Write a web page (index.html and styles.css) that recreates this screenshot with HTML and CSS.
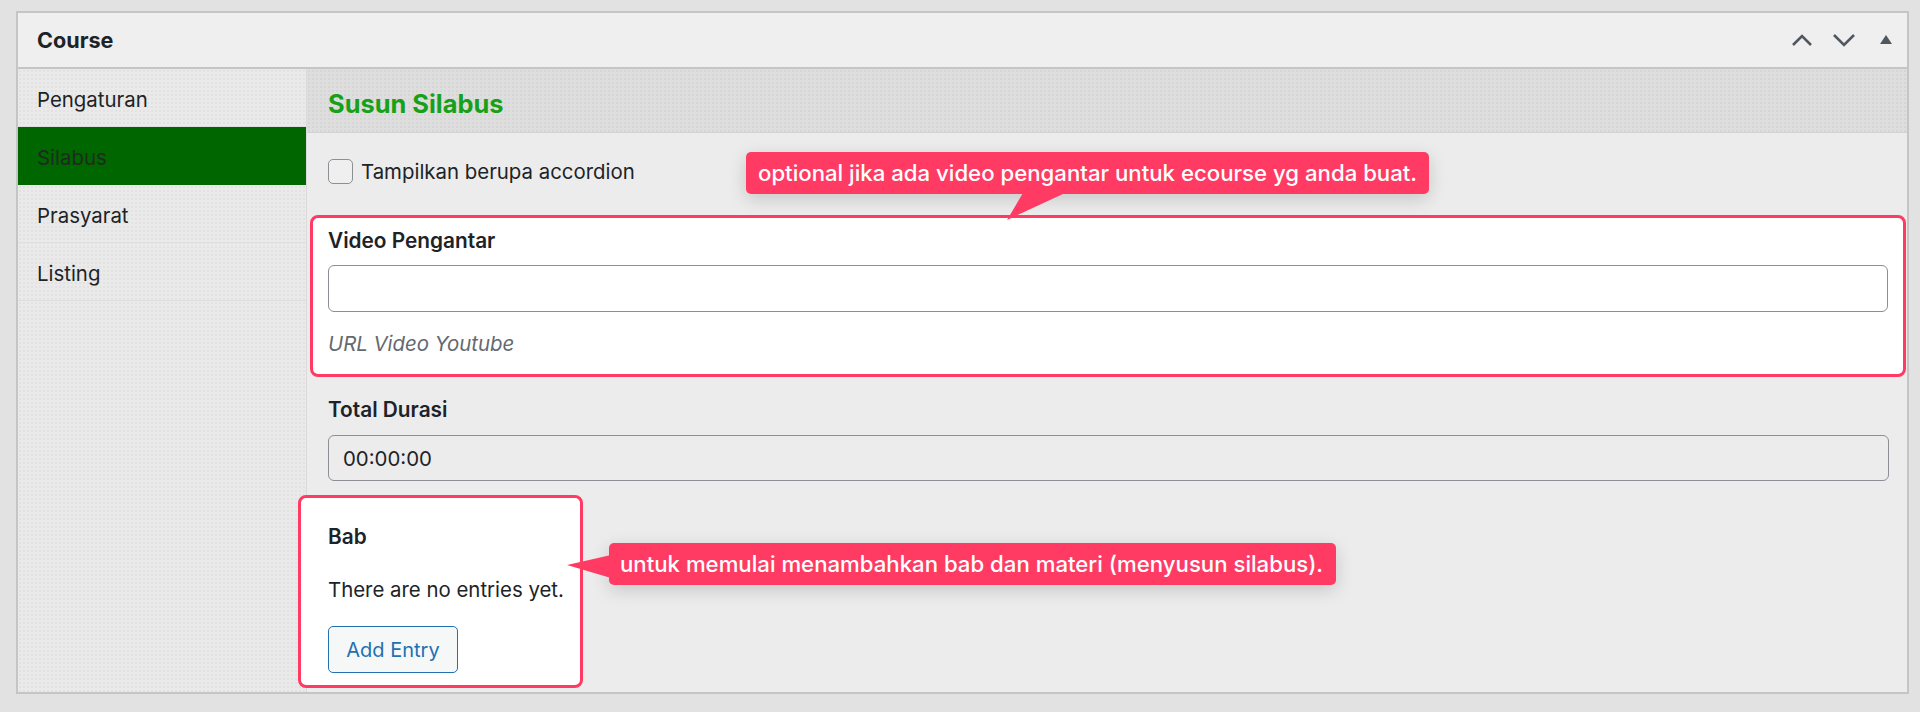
FILE: index.html
```html
<!DOCTYPE html>
<html lang="id">
<head>
<meta charset="utf-8">
<title>Course</title>
<link rel="stylesheet" href="styles.css">
</head>
<body>
<div class="page">
  <div class="postbox">
    <div class="postbox-header">
      <h2 class="postbox-title">Course</h2>
      <div class="handle-actions">
        <button class="handle-btn" aria-label="Move up">
          <svg width="22" height="14" viewBox="0 0 22 14"><polyline points="2,12 11,3 20,12" fill="none" stroke="#50575e" stroke-width="2.6"/></svg>
        </button>
        <button class="handle-btn" aria-label="Move down">
          <svg width="24" height="14" viewBox="0 0 24 14"><polyline points="2,2 12,12 22,2" fill="none" stroke="#50575e" stroke-width="2.6"/></svg>
        </button>
        <button class="handle-btn" aria-label="Toggle">
          <svg width="14" height="10" viewBox="0 0 14 10"><polygon points="7,0 13,9 1,9" fill="#50575e"/></svg>
        </button>
      </div>
    </div>
    <div class="postbox-inside">
      <ul class="tabs">
        <li class="tab">Pengaturan</li>
        <li class="tab active">Silabus</li>
        <li class="tab">Prasyarat</li>
        <li class="tab">Listing</li>
      </ul>
      <div class="panel">
        <div class="panel-heading"><h3 class="panel-title">Susun Silabus</h3></div>
        <div class="panel-body">
          <label class="check-row"><span class="checkbox"></span>Tampilkan berupa accordion</label>

          <div class="field highlight wide">
            <div class="field-label">Video Pengantar</div>
            <div class="input white"></div>
            <div class="description">URL Video Youtube</div>
          </div>

          <div class="field plain">
            <div class="field-label">Total Durasi</div>
            <div class="input">00:00:00</div>
          </div>

          <div class="field highlight narrow">
            <div class="field-label">Bab</div>
            <p class="empty">There are no entries yet.</p>
            <button class="button">Add Entry</button>
          </div>
        </div>
      </div>
    </div>
  </div>

  <div class="tip tip-one">optional jika ada video pengantar untuk ecourse yg anda buat.
    <svg class="tip-arrow arrow-down" width="70" height="30" viewBox="0 0 70 30"><polygon points="22,0 64,0 6,27" fill="#ff3b64"/></svg>
  </div>
  <div class="tip tip-two">untuk memulai menambahkan bab dan materi (menyusun silabus).
    <svg class="tip-arrow arrow-left" width="50" height="30" viewBox="0 0 50 30"><polygon points="48,2 4,12 48,25" fill="#ff3b64"/></svg>
  </div>
</div>
</body>
</html>
```
FILE: styles.css
```css
* { box-sizing: border-box; }
html, body { margin: 0; padding: 0; }
body {
  background: #e2e2e2;
  font-family: Inter, "Noto Sans", "Liberation Sans", sans-serif;
  color: #1d2327;
  font-size: 20.4px;
  width: 1920px;
  height: 712px;
  overflow: hidden;
}
.page {
  position: relative;
  padding: 11px 11px 0 16px;
}
.postbox {
  width: 1893px;
  border: 2px solid #c5c5c5;
  background: #ececec;
}
.postbox-header {
  height: 56px;
  background: #efefef;
  border-bottom: 2px solid #c5c5c5;
  display: flex;
  align-items: center;
  justify-content: space-between;
}
.postbox-title {
  margin: 0 0 0 19px;
  padding-top: 2px;
  font-size: 21.6px;
  font-weight: 700;
  line-height: 1;
}
.handle-actions { display: flex; }
.handle-btn {
  width: 42px;
  height: 40px;
  border: 0;
  padding: 0;
  background: transparent;
  display: flex;
  align-items: center;
  justify-content: center;
}
.postbox-inside { display: flex; }
.tabs {
  list-style: none;
  margin: 0;
  padding: 0;
  width: 289px;
  flex: none;
  background-color: #eaeaea;
  background-image: radial-gradient(rgba(0,0,0,0.035) 0.8px, transparent 0.8px);
  background-size: 4px 4px;
  border-right: 1px solid #dadada;
}
.tab {
  height: 58px;
  display: flex;
  align-items: center;
  padding: 3px 0 0 19px;
  border-bottom: 1px solid #dedede;
}
.tab.active { background: #006600; color: #1f2b1f; border-bottom-color: #006600; }
.panel { flex: 1; min-width: 0; }
.panel-heading {
  height: 64px;
  background-color: #dedede;
  background-image: radial-gradient(rgba(0,0,0,0.035) 0.8px, transparent 0.8px);
  background-size: 4px 4px;
  border-bottom: 1px solid #d2d2d2;
  display: flex;
  align-items: center;
  padding: 6px 0 0 21px;
}
.panel-title {
  margin: 0;
  font-size: 25.4px;
  font-weight: 700;
  color: #18a018;
}
.panel-body {
  padding: 26px 0 4px 21px;
  display: flex;
  flex-direction: column;
}
.check-row {
  display: flex;
  align-items: center;
  gap: 8px;
  height: 25px;
  line-height: 25px;
}
.checkbox {
  width: 25px;
  height: 25px;
  border: 1.5px solid #8c8f94;
  border-radius: 5px;
  background: #efefef;
}
.field-label { font-weight: 600; font-size: 20.8px; line-height: 30px; }
.highlight {
  background: #fff;
  border: 3px solid #ff3b64;
  border-radius: 8px;
}
.wide {
  margin: 31px 1px 0 -18px;
  padding: 8px 15px 16px 15px;
}
.input {
  height: 47px;
  border: 1.5px solid #8c8f94;
  border-radius: 6px;
  background: #ececec;
  margin-top: 9px;
  margin-right: 18px;
  padding-left: 14px;
  display: flex;
  align-items: center;
}
.input.white { background: #fff; margin-right: 0; }
.description {
  margin-top: 18px;
  line-height: 28px;
  color: #646970;
  font-style: italic;
}
.plain { margin-top: 18px; }
.plain .input { margin-top: 10px; height: 46px; }
.narrow {
  width: 285px;
  margin: 14px 0 0 -30px;
  padding: 24px 10px 12px 27px;
}
.empty { margin: 24px 0 0; line-height: 28px; }
.button {
  margin-top: 22px;
  height: 47px;
  width: 130px;
  border: 1.5px solid #2271b1;
  border-radius: 5px;
  background: #f6f7f7;
  color: #2271b1;
  font: inherit;
  font-size: 20px;
  padding: 0;
}
.tip {
  position: absolute;
  height: 42px;
  background: #ff3b64;
  color: #fff;
  border-radius: 5px;
  font-size: 22.2px;
  font-weight: 500;
  line-height: 42px;
  white-space: nowrap;
  box-shadow: 0 5px 18px rgba(0,0,0,0.16);
}
.tip-one { left: 746px; top: 152px; width: 683px; padding-left: 12px; }
.tip-two { left: 609px; top: 543px; width: 727px; padding-left: 11px; }
.tip-arrow { position: absolute; display: block; }
.arrow-down { left: 255px; top: 41px; }
.arrow-left { left: -46px; top: 10px; }
```
